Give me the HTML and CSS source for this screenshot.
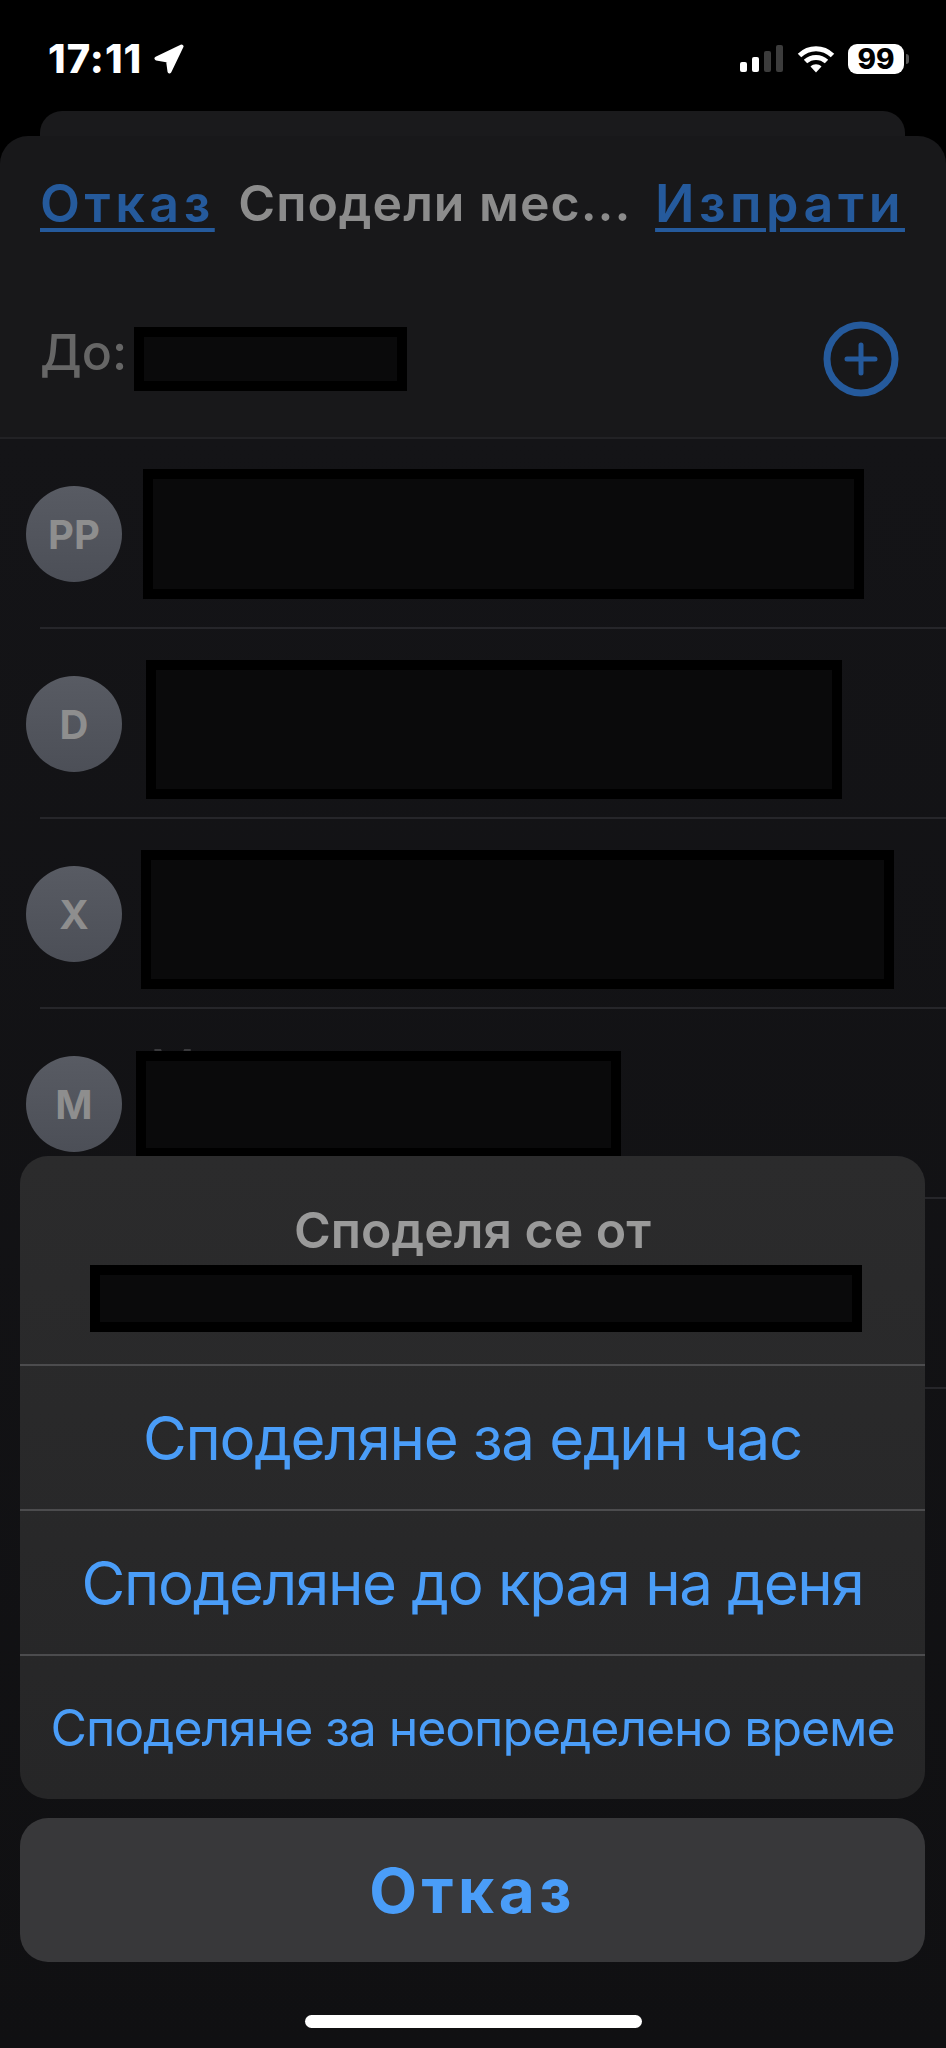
FILE: index.html
```html
<!DOCTYPE html>
<html lang="bg">
  <head>
    <meta charset="UTF-8">
    <title>Сподели местоположение</title>
    <link rel="stylesheet" href="styles.css">
  </head>
  <body>
    <div class="phone">
      <div class="status-bar">
        <div class="status-left">
          <span class="time">17:11</span>
          <svg class="location" viewBox="0 0 30 30"><path d="M27.5 2.5 2.5 14.5 14 16.5 15.5 27.5Z" fill="#fff" stroke="#fff" stroke-width="4" stroke-linejoin="round"/></svg>
        </div>
        <div class="status-right">
          <div class="signal">
            <span class="bar bar-1"></span>
            <span class="bar bar-2"></span>
            <span class="bar bar-3"></span>
            <span class="bar bar-4"></span>
          </div>
          <svg class="wifi" viewBox="0 0 38 28"><path d="M2.5 10.5C12 1.5 26 1.5 35.5 10.5M8.5 16.5C14.5 11 23.500 11 29.500 16.500" fill="none" stroke="#fff" stroke-width="5"/><path d="M13.500 21.500C16.500 18.500 21.500 18.500 24.500 21.500L19 27.500Z" fill="#fff"/></svg>
          <div class="battery">99</div>
          <div class="battery-nub"></div>
        </div>
      </div>

      <div class="back-card"></div>
      <div class="sheet">
        <div class="nav">
          <span class="nav-link">Отказ</span>
          <span class="nav-title">Сподели мес...</span>
          <span class="nav-link">Изпрати</span>
        </div>
        <div class="to-row">
          <span class="to-label">До:</span>
          <div class="redact redact-to"></div>
          <svg class="add" viewBox="0 0 76 76"><circle cx="38" cy="38" r="34" fill="none" stroke="#255a9c" stroke-width="7"/><path d="M24 38H52M38 24V52" fill="none" stroke="#255a9c" stroke-width="5" stroke-linecap="round"/></svg>
        </div>
        <div class="contacts">
          <div class="contact">
            <div class="avatar">PP</div>
            <div class="redact redact-1"></div>
          </div>
          <div class="contact">
            <div class="avatar">D</div>
            <div class="redact redact-2"></div>
          </div>
          <div class="contact">
            <div class="avatar">X</div>
            <div class="redact redact-3"></div>
          </div>
          <div class="contact">
            <div class="avatar">M</div>
            <span class="clipped-name">M</span>
            <div class="redact redact-4"></div>
          </div>
          <div class="contact"></div>
        </div>
      </div>

      <div class="action-wrap">
        <div class="action-sheet">
          <div class="action-head">
            <div class="action-title">Споделя се от</div>
            <div class="redact redact-from"></div>
          </div>
          <div class="action-item">Споделяне за един час</div>
          <div class="action-item">Споделяне до края на деня</div>
          <div class="action-item action-small">Споделяне за неопределено време</div>
        </div>
        <div class="action-cancel">Отказ</div>
      </div>
      <div class="home-bar"></div>
    </div>
  </body>
</html>
```

FILE: styles.css
```css
* {
  box-sizing: border-box;
}

body {
  background-color: #000;
  font-family: Inter, "Noto Sans", sans-serif;
  margin: 0;
  padding: 0;
}

.phone {
  background-color: #000;
  height: 2048px;
  overflow: hidden;
  position: relative;
  width: 946px;
}

.status-bar {
  align-items: center;
  color: #fff;
  display: flex;
  height: 111px;
  justify-content: space-between;
  padding: 6px 37px 0 48px;
}

.status-left {
  align-items: center;
  display: flex;
  gap: 12px;
}

.time {
  font-size: 40px;
  font-weight: 800;
  letter-spacing: 1px;
}

.location {
  height: 30px;
  width: 30px;
}

.status-right {
  align-items: center;
  display: flex;
}

.signal {
  align-items: flex-end;
  display: flex;
  gap: 5px;
  height: 27px;
  margin-right: 14px;
}

.bar {
  background-color: #fff;
  border-radius: 2px;
  width: 7px;
}

.bar-1 { height: 10px; }
.bar-2 { height: 15px; }
.bar-3 { background-color: #3c3c3c; height: 21px; }
.bar-4 { background-color: #3c3c3c; height: 27px; }

.wifi {
  height: 28px;
  margin-right: 13px;
  width: 38px;
}

.battery {
  background-color: #fff;
  border-radius: 9px;
  color: #000;
  font-size: 28px;
  font-weight: 800;
  height: 30px;
  line-height: 30px;
  text-align: center;
  width: 56px;
}

.battery-nub {
  background-color: #555;
  border-radius: 0 3px 3px 0;
  height: 10px;
  margin-left: 2px;
  width: 3px;
}

.back-card {
  background-color: #1a1a1c;
  border-radius: 22px 22px 0 0;
  height: 30px;
  margin: 0 41px 0 40px;
}

.sheet {
  background-color: #18181a;
  border-radius: 28px 28px 0 0;
  height: 1912px;
  margin-top: -5px;
}

.nav {
  align-items: center;
  display: flex;
  height: 144px;
  justify-content: space-between;
  padding: 0 41px 10px 40px;
}

.nav-link {
  color: #255a9c;
  font-size: 52px;
  font-weight: 600;
  letter-spacing: 4.5px;
  text-decoration: underline;
  text-decoration-thickness: 4px;
  text-underline-offset: 6px;
}

.nav-title {
  color: #8c8c8c;
  font-size: 50px;
  font-weight: 600;
  letter-spacing: 1px;
}

.to-row {
  align-items: center;
  border-bottom: 2px solid #222225;
  display: flex;
  height: 159px;
  padding: 0 47px 0 40px;
}

.to-label {
  color: #666;
  font-size: 50px;
  font-weight: 500;
  margin-bottom: 14px;
}

.redact {
  background-color: #0a0a0b;
  border: 10px solid #000;
  flex: none;
  position: relative;
}

.redact-to {
  height: 64px;
  margin-left: 7px;
  width: 273px;
}

.add {
  height: 76px;
  margin-left: auto;
  width: 76px;
}

.contacts {
  background: linear-gradient(#141417, #101012);
  height: 1612px;
}

.contact {
  align-items: center;
  display: flex;
  height: 190px;
  padding-left: 26px;
  position: relative;
}

.contact::after {
  background-color: #26262a;
  bottom: 0;
  content: "";
  height: 2px;
  left: 40px;
  position: absolute;
  right: 0;
}

.avatar {
  align-items: center;
  background: linear-gradient(#585b63, #4c4f57);
  border-radius: 50%;
  color: #8e8e8e;
  display: flex;
  flex: none;
  font-size: 40px;
  font-weight: 700;
  height: 96px;
  justify-content: center;
  width: 96px;
}

.clipped-name {
  color: #3a3a3d;
  font-size: 50px;
  left: 150px;
  line-height: 50px;
  position: absolute;
  top: 34px;
}

.redact-1 { height: 130px; margin-left: 21px; width: 721px; }
.redact-2 { height: 139px; margin-left: 24px; margin-top: 10px; width: 696px; }
.redact-3 { height: 139px; margin-left: 19px; margin-top: 10px; width: 753px; }
.redact-4 { height: 107px; margin-left: 14px; width: 485px; }

.action-wrap {
  display: flex;
  flex-direction: column;
  gap: 19px;
  left: 20px;
  position: absolute;
  right: 21px;
  top: 1156px;
}

.action-sheet {
  background: linear-gradient(#2b2b2c, #262627);
  border-radius: 28px;
  overflow: hidden;
}

.action-head {
  align-items: center;
  display: flex;
  flex-direction: column;
  height: 208px;
  padding-top: 42px;
}

.action-title {
  color: #9a9a9a;
  font-size: 50px;
  font-weight: 600;
  line-height: 64px;
}

.redact-from {
  height: 67px;
  margin-left: 7px;
  margin-top: 3px;
  width: 772px;
}

.action-item {
  align-items: center;
  border-top: 2px solid #4c4c4e;
  color: #4a9df8;
  display: flex;
  font-size: 60px;
  height: 145px;
  justify-content: center;
  letter-spacing: -1.3px;
}

.action-small {
  font-size: 50px;
  letter-spacing: -1.1px;
}

.action-cancel {
  align-items: center;
  background-color: #38383a;
  border-radius: 28px;
  color: #4a9df8;
  display: flex;
  font-size: 62px;
  font-weight: 700;
  height: 144px;
  justify-content: center;
  letter-spacing: 4.5px;
}

.home-bar {
  background-color: #fff;
  border-radius: 7px;
  height: 13px;
  left: 305px;
  position: absolute;
  top: 2015px;
  width: 337px;
}
```
